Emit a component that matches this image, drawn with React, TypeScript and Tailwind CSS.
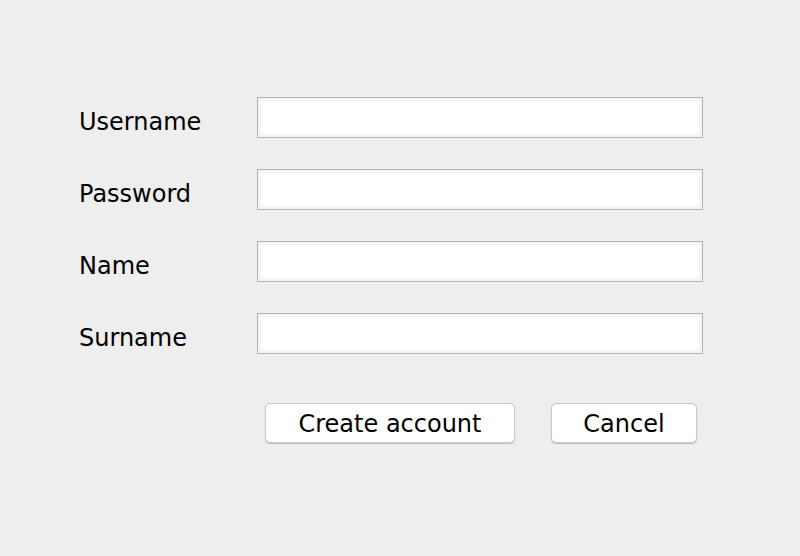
export default function App() {
  const fields = ["Username", "Password", "Name", "Surname"]
  return (
    <div className="min-h-[556px] w-[800px] bg-[#eeeeee] pl-[79px] pt-[97px] font-['DejaVu_Sans',sans-serif] text-[24px] text-black">
      <div className="grid grid-cols-[178px_446px] gap-y-[31px]">
        {fields.map((f) => (
          <div key={f} className="contents">
            <label className="flex items-center pt-[8px] leading-none">{f}</label>
            <input
              type={f === "Password" ? "password" : "text"}
              className="h-[41px] w-[446px] border border-[#b4b4b4] bg-white shadow-[inset_0_0_0_3px_#f6f6f6] outline-none"
            />
          </div>
        ))}
      </div>
      <div className="mt-[49px] flex gap-[36px] pl-[186px]">
        <button className="h-[40px] w-[250px] rounded-[5px] border border-[#c8c8c8] bg-white pt-[2px] leading-none shadow-[0_1px_1px_rgba(0,0,0,0.2)]">
          Create account
        </button>
        <button className="h-[40px] w-[146px] rounded-[5px] border border-[#c8c8c8] bg-white pt-[2px] leading-none shadow-[0_1px_1px_rgba(0,0,0,0.2)]">
          Cancel
        </button>
      </div>
    </div>
  )
}
